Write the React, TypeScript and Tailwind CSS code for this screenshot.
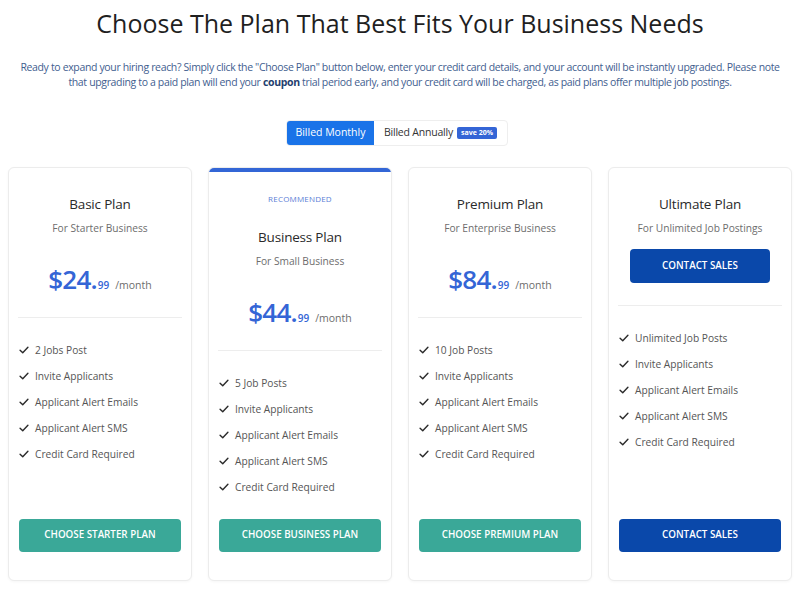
import React from "react";

const Check = () => (
  <svg width="10" height="10" viewBox="0 0 12 12" className="shrink-0" fill="none">
    <path d="M1.3 6.3 L4.5 9.4 L10.7 2.8" stroke="#2b2b2b" strokeWidth="1.7" strokeLinecap="round" strokeLinejoin="round" />
  </svg>
);

type Plan = {
  name: string;
  sub: string;
  price?: string;
  features: string[];
  cta: string;
  recommended?: boolean;
  contact?: boolean;
};

const plans: Plan[] = [
  {
    name: "Basic Plan",
    sub: "For Starter Business",
    price: "24",
    features: ["2 Jobs Post", "Invite Applicants", "Applicant Alert Emails", "Applicant Alert SMS", "Credit Card Required"],
    cta: "CHOOSE STARTER PLAN",
  },
  {
    name: "Business Plan",
    sub: "For Small Business",
    price: "44",
    features: ["5 Job Posts", "Invite Applicants", "Applicant Alert Emails", "Applicant Alert SMS", "Credit Card Required"],
    cta: "CHOOSE BUSINESS PLAN",
    recommended: true,
  },
  {
    name: "Premium Plan",
    sub: "For Enterprise Business",
    price: "84",
    features: ["10 Job Posts", "Invite Applicants", "Applicant Alert Emails", "Applicant Alert SMS", "Credit Card Required"],
    cta: "CHOOSE PREMIUM PLAN",
  },
  {
    name: "Ultimate Plan",
    sub: "For Unlimited Job Postings",
    features: ["Unlimited Job Posts", "Invite Applicants", "Applicant Alert Emails", "Applicant Alert SMS", "Credit Card Required"],
    cta: "CONTACT SALES",
    contact: true,
  },
];

function Card({ p }: { p: Plan }) {
  return (
    <div className="relative flex flex-col overflow-hidden rounded-[6px] border border-[#ececec] bg-white shadow-[0_1px_3px_rgba(0,0,0,0.04)]">
      {p.recommended && <div className="absolute left-0 right-0 top-0 h-[4px] bg-[#3366d6]" />}
      <div className={p.recommended ? "pt-[25px]" : "pt-[26px]"}>
        {p.recommended && (
          <div className="mb-[22px] text-center text-[8px] leading-[12px] tracking-[0.2px] text-[#5b7ed6]">RECOMMENDED</div>
        )}
        <div className="text-center text-[13.5px] leading-[20px] font-medium tracking-[-0.2px] text-[#2a2a2a]">{p.name}</div>
        <div className="mt-[6px] text-center text-[10.2px] leading-[16px] text-[#6d6d6d]">{p.sub}</div>
        {p.price ? (
          <div className="mt-[27px] flex h-[32px] items-baseline justify-center">
            <span className="text-[26px] leading-[32px] font-semibold tracking-[-0.8px] text-[#3465d6]">${p.price}.</span>
            <span className="ml-[1px] text-[10px] font-semibold text-[#3465d6]">99</span>
            <span className="ml-[6px] text-[10.5px] font-medium text-[#6d6d6d]">/month</span>
          </div>
        ) : (
          <div className="mt-[13px] px-[21px]">
            <div className="flex h-[34px] items-center justify-center rounded-[4px] bg-[#0a48aa] text-[9.8px] font-semibold text-white">
              CONTACT SALES
            </div>
          </div>
        )}
      </div>
      <div className="mx-[9px] mt-[22px] h-px bg-[#ededed]" />
      <ul className="mt-[24px] flex flex-col gap-[10px] px-[10px]">
        {p.features.map((f) => (
          <li key={f} className="flex items-center gap-[6px] text-[10.2px] leading-[16px] text-[#555]">
            <Check />
            <span>{f}</span>
          </li>
        ))}
      </ul>
      <div className="mt-auto px-[10px] pb-[28px]">
        <div
          className={
            "flex h-[33px] items-center justify-center rounded-[4px] text-[9.8px] font-semibold text-white " +
            (p.contact ? "bg-[#0a48aa]" : "bg-[#3aa898]")
          }
        >
          {p.cta}
        </div>
      </div>
    </div>
  );
}

export default function App() {
  return (
    <div className="h-[592px] w-[800px] bg-white" style={{ fontFamily: '"Open Sans", "Noto Sans", sans-serif' }}>
      <h1 className="pt-[6px] text-center text-[25px] leading-[34px] font-normal text-[#1f1f1f]">
        Choose The Plan That Best Fits Your Business Needs
      </h1>
      <p className="mx-auto mt-[20px] w-[772px] text-center text-[10.5px] leading-[15px] tracking-[-0.35px] text-[#3f5e8f]">
        Ready to expand your hiring reach? Simply click the "Choose Plan" button below, enter your credit card details, and your account will be instantly upgraded. Please note that upgrading to a paid plan will end your <b className="font-bold text-[#23406e]">coupon</b> trial period early, and your credit card will be charged, as paid plans offer multiple job postings.
      </p>
      <div className="mt-[30px] flex justify-center">
        <div className="ml-[-6px] flex h-[26px] items-stretch rounded-[4px] border border-[#eeeeee] bg-white">
          <div className="flex w-[87px] items-center justify-center rounded-l-[3px] bg-[#1a73e8] text-[10.5px] text-white">Billed Monthly</div>
          <div className="flex items-center pl-[10px] pr-[10px] text-[10.5px] tracking-[-0.2px] text-[#333]">
            Billed Annually
            <span className="ml-[4px] rounded-[2px] bg-[#3465d6] px-[4px] text-[7px] font-bold leading-[12px] tracking-normal text-white">save 20%</span>
          </div>
        </div>
      </div>
      <div className="mt-[21px] grid h-[414px] grid-cols-4 gap-[16px] px-[8px]">
        {plans.map((p) => (
          <Card key={p.name} p={p} />
        ))}
      </div>
    </div>
  );
}
